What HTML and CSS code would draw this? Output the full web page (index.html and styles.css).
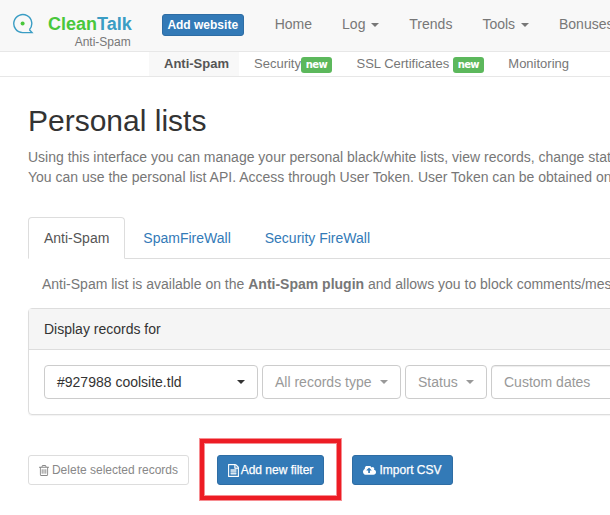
FILE: index.html
```html
<!DOCTYPE html>
<html lang="en">
<head>
<meta charset="utf-8">
<title>Personal lists</title>
<link rel="stylesheet" href="styles.css">
</head>
<body>
<header class="topbar">
  <svg class="logo" viewBox="0 0 22 22"><path d="M17.4 16.7A9 9 0 1 0 10.6 19.6H20L17.4 16.7" fill="none" stroke="#3a9dc4" stroke-width="1.4"/><circle cx="10.6" cy="10.6" r="2" fill="#49c73b"/></svg>
  <div class="brand">
    <div class="brand-name"><span class="brand-green">Clean</span>Talk</div>
    <div class="brand-sub">Anti-Spam</div>
  </div>
  <a class="add-site">Add website</a>
  <nav class="menu">
    <a>Home</a>
    <a>Log <i class="caret"></i></a>
    <a>Trends</a>
    <a>Tools <i class="caret"></i></a>
    <a>Bonuses</a>
  </nav>
</header>
<nav class="subnav">
  <a class="current">Anti-Spam</a>
  <a>Security<span class="badge">new</span></a>
  <a>SSL Certificates <span class="badge">new</span></a>
  <a>Monitoring</a>
</nav>
<main>
  <h1>Personal lists</h1>
  <p class="intro">Using this interface you can manage your personal black/white lists, view records, change status.<br>You can use the personal list API. Access through User Token. User Token can be obtained on</p>
  <div class="tabs">
    <a class="active">Anti-Spam</a>
    <a>SpamFireWall</a>
    <a>Security FireWall</a>
  </div>
  <p class="info">Anti-Spam list is available on the <b>Anti-Spam plugin</b> and allows you to block comments/messages</p>
  <section class="panel">
    <div class="panel-head">Display records for</div>
    <div class="panel-body">
      <div class="control site">#927988 coolsite.tld<i class="caret"></i></div>
      <div class="control type">All records type<i class="caret"></i></div>
      <div class="control status">Status<i class="caret"></i></div>
      <div class="control dates">Custom dates</div>
    </div>
  </section>
  <div class="actions">
    <a class="btn btn-plain"><svg class="icon trash" viewBox="192 128 1408 1536"><path d="M704 736v576q0 14-9 23t-23 9h-64q-14 0-23-9t-9-23v-576q0-14 9-23t23-9h64q14 0 23 9t9 23zm256 0v576q0 14-9 23t-23 9h-64q-14 0-23-9t-9-23v-576q0-14 9-23t23-9h64q14 0 23 9t9 23zm256 0v576q0 14-9 23t-23 9h-64q-14 0-23-9t-9-23v-576q0-14 9-23t23-9h64q14 0 23 9t9 23zm128 724v-948h-896v948q0 22 7 40.5t14.5 27 10.5 8.5h832q3 0 10.5-8.5t14.5-27 7-40.5zm-672-1076h448l-48-117q-7-9-17-11h-317q-10 2-17 11zm928 32v64q0 14-9 23t-23 9h-96v948q0 83-47 143.5t-113 60.5h-832q-66 0-113-58.5t-47-141.5v-952h-96q-14 0-23-9t-9-23v-64q0-14 9-23t23-9h309l70-167q15-37 54-63t79-26h320q40 0 79 26t54 63l70 167h309q14 0 23 9t9 23z"/></svg>Delete selected records</a>
    <div class="highlight"><div class="highlight-inner"><a class="btn btn-primary add"><svg class="icon file" viewBox="128 0 1536 1792"><path d="M1596 380q28 28 48 76t20 88v1152q0 40-28 68t-68 28h-1344q-40 0-68-28t-28-68v-1600q0-40 28-68t68-28h896q40 0 88 20t76 48zm-444-244v376h376q-10-29-22-41l-313-313q-12-12-41-22zm384 1528v-1024h-416q-40 0-68-28t-28-68v-416h-768v1536h1280zM512 768h768v128h-768zM512 1024h768v128h-768zM512 1280h768v128h-768z"/></svg>Add new filter</a></div></div>
    <a class="btn btn-primary import"><svg class="icon cloud" viewBox="0 256 1920 1280"><path d="M1280 864q0-14-9-23l-352-352q-9-9-23-9t-23 9l-351 351q-10 12-10 24 0 14 9 23t23 9h224v352q0 13 9.5 22.5t22.5 9.5h192q13 0 22.5-9.5t9.5-22.5v-352h224q13 0 22.5-9.5t9.5-22.5zm640 288q0 159-112.5 271.5t-271.5 112.5h-1088q-185 0-316.5-131.5t-131.5-316.5q0-130 70-240t188-165q-2-30-2-43 0-212 150-362t362-150q156 0 285.5 87t188.5 231q71-62 166-62 106 0 181 75t75 181q0 76-41 138 130 31 213.5 135.5t83.5 238.5z"/></svg>Import CSV</a>
  </div>
</main>
</body>
</html>
```
FILE: styles.css
```css
* { box-sizing: border-box; }
body {
  margin: 0;
  height: 515px;
  overflow: hidden;
  background: #fff;
  color: #777;
  font: 14px/20px "Liberation Sans", Arial, sans-serif;
  white-space: nowrap;
}
.topbar {
  display: flex;
  align-items: flex-start;
  height: 52px;
  background: #f8f8f8;
  border-bottom: 1px solid #e7e7e7;
}
.logo { flex: none; width: 22px; height: 22px; margin: 13px 0 0 12px; }
.brand { width: 84px; margin: 14px 0 0 14px; }
.brand-name { font-size: 18px; font-weight: bold; color: #3a9dc4; }
.brand-green { color: #49c73b; }
.brand-sub { font-size: 12px; line-height: 16px; text-align: right; padding-right: 1px; }
.add-site {
  flex: none;
  width: 82px;
  height: 22px;
  margin: 14px 16px 0 30px;
  border: 1px solid #2e6da4;
  border-radius: 3px;
  background: #337ab7;
  color: #fff;
  font-size: 12px;
  font-weight: bold;
  text-align: center;
}
.menu { display: flex; padding-top: 14px; }
.menu a { flex: none; padding: 0 15px; }
.caret {
  display: inline-block;
  margin-left: 2px;
  border: 4px solid transparent;
  border-top-color: currentColor;
  border-bottom: 0;
  vertical-align: middle;
}
.subnav {
  display: flex;
  height: 25px;
  padding-left: 149px;
  border-bottom: 1px solid #e7e7e7;
  font-size: 13px;
  line-height: 24px;
}
.subnav a { flex: none; display: flex; padding: 0 12.5px 0 12px; white-space: pre; }
.subnav .current { width: 90px; margin-right: 3px; padding: 0 0 0 15px; background: #f8f8f8; color: #555; font-weight: bold; }
.badge {
  width: 31px;
  height: 16px;
  margin-top: 5px;
  border-radius: 3px;
  background: #5cb85c;
  color: #fff;
  font: bold 10px/15px "DejaVu Sans", sans-serif;
  text-align: center;
  letter-spacing: -.6px;
}
main { width: 700px; padding-left: 28px; }
h1 { margin: 27px 0 10px; color: #333; font-size: 30px; font-weight: normal; line-height: 33px; }
p { margin: 0; }
.tabs { display: flex; height: 42px; margin-top: 30px; border-bottom: 1px solid #ddd; }
.tabs a { height: 42px; margin-right: 2px; padding: 11px 16px; color: #337ab7; }
.tabs .active {
  padding: 10px 15px;
  border: 1px solid #ddd;
  border-bottom-color: #fff;
  border-radius: 4px 4px 0 0;
  background: #fff;
  color: #555;
}
.info { margin: 15px 0 14px 14px; }
.panel { height: 107px; border: 1px solid #ddd; border-radius: 4px; box-shadow: 0 1px 1px rgba(0,0,0,.05); }
.panel-head { height: 41px; padding: 10px 15px; border-bottom: 1px solid #ddd; background: #f5f5f5; color: #333; }
.panel-body { display: flex; gap: 4px; padding: 15px; }
.control {
  display: flex;
  flex: none;
  justify-content: space-between;
  align-items: center;
  height: 34px;
  padding: 0 12px;
  border: 1px solid #ccc;
  border-radius: 4px;
  color: #999;
}
.site { width: 214px; color: #333; }
.type { width: 139px; }
.status { width: 82px; }
.dates { width: 190px; box-shadow: inset 0 1px 1px rgba(0,0,0,.075); }
.actions { display: flex; align-items: flex-start; margin-top: 23px; }
.btn {
  display: flex;
  flex: none;
  align-items: center;
  justify-content: center;
  height: 30px;
  border: 1px solid #2e6da4;
  border-radius: 3px;
  font-size: 12px;
}
.btn-plain { width: 161px; margin-top: 17px; border-color: #ddd; color: #888; }
.btn-primary { background: #337ab7; color: #fff; -webkit-text-stroke: .25px #fff; }
.add { width: 107px; }
.import { width: 101px; margin: 17px 0 0 10px; }
.highlight {
  width: 143px;
  height: 63px;
  margin-left: 10px;
  padding: 4px;
  border: 1px solid #f68e92;
  background: #ed1c24;
}
.highlight-inner {
  height: 53px;
  padding: 11px 0 0 12px;
  border: 1px solid #f68e92;
  background: #fff;
}
.icon { flex: none; fill: currentColor; stroke: none; }
.trash { width: 10px; height: 11px; margin-right: 3px; }
.file { width: 11px; height: 13px; margin-right: 2px; stroke: #fff; stroke-width: 50px; }
.cloud { width: 13px; height: 9px; margin-right: 3px; }
```
